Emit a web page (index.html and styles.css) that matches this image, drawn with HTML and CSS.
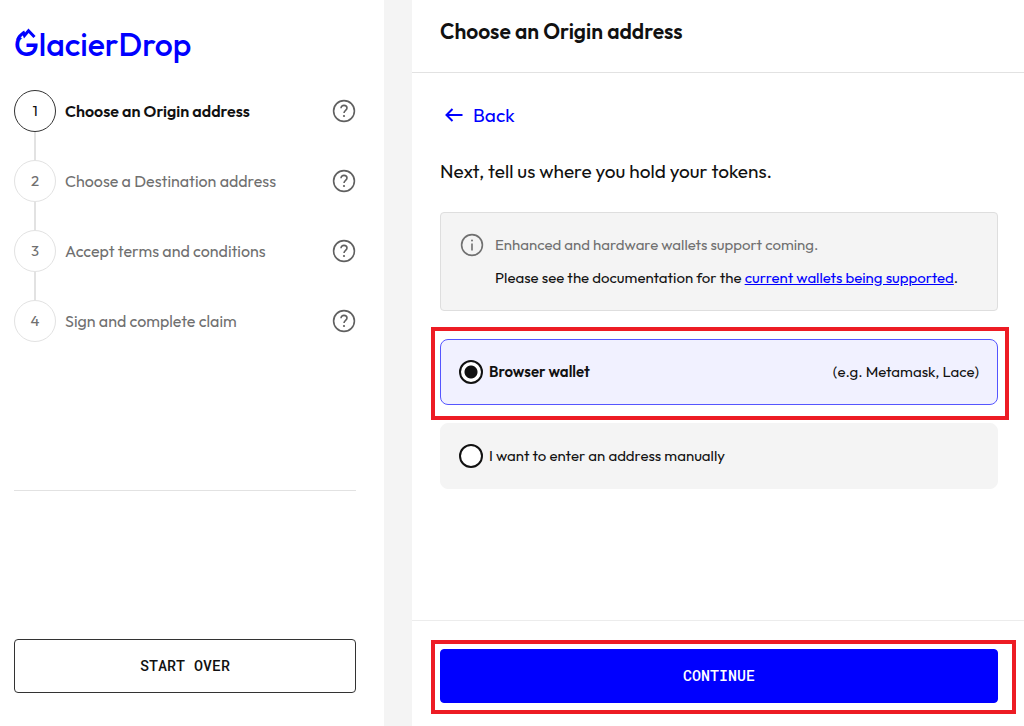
FILE: index.html
```html
<!DOCTYPE html>
<html lang="en">
<head>
  <meta charset="UTF-8" />
  <meta name="viewport" content="width=device-width, initial-scale=1" />
  <title>GlacierDrop</title>
  <link rel="stylesheet" href="styles.css">
</head>
<body>
  <!-- shared icons -->
  <svg class="defs" aria-hidden="true">
    <symbol id="icon-help" viewBox="0 0 24 24">
      <circle cx="12" cy="12" r="10.400" />
      <path d="M9 9.200C9 7.400 10.300 6.400 12 6.400s3 1 3 2.700c0 2.200-3 2.500-3 5" />
      <circle class="dot" cx="12" cy="17" r="1.100" />
    </symbol>
  </svg>

  <div class="layout">
    <aside class="sidebar">
      <div class="logo">
        <span>GlacierDrop</span>
        <svg class="logo-peak" viewBox="0 0 24 16" aria-hidden="true">
          <path class="snow" d="M5 4h19v11h-7l-3-3H8l-3-1z" />
          <path class="ridge" d="M3.500 14C4.500 11 6.500 9 9.500 6.800L10.500 9.500 14.500 4.800 20.500 11" />
        </svg>
      </div>

      <ol class="steps">
        <li class="step active">
          <span class="step-number">1</span>
          <span class="step-label">Choose an Origin address</span>
          <button class="help" type="button" aria-label="Help"><svg><use href="#icon-help" /></svg></button>
        </li>
        <li class="step">
          <span class="step-number">2</span>
          <span class="step-label">Choose a Destination address</span>
          <button class="help" type="button" aria-label="Help"><svg><use href="#icon-help" /></svg></button>
        </li>
        <li class="step">
          <span class="step-number">3</span>
          <span class="step-label">Accept terms and conditions</span>
          <button class="help" type="button" aria-label="Help"><svg><use href="#icon-help" /></svg></button>
        </li>
        <li class="step">
          <span class="step-number">4</span>
          <span class="step-label">Sign and complete claim</span>
          <button class="help" type="button" aria-label="Help"><svg><use href="#icon-help" /></svg></button>
        </li>
      </ol>

      <hr class="divider">
      <button class="btn btn-outline" type="button">START OVER</button>
    </aside>

    <main class="panel">
      <header class="panel-header">
        <h1>Choose an Origin address</h1>
      </header>

      <div class="panel-body">
        <a class="back" href="#">
          <svg viewBox="0 0 18 14" aria-hidden="true"><path d="M17.500 7H1.500M7.500 1l-6 6 6 6" /></svg>
          Back
        </a>
        <p class="lead">Next, tell us where you hold your tokens.</p>

        <div class="notice">
          <svg class="notice-icon" viewBox="0 0 24 24" aria-hidden="true">
            <circle cx="12" cy="12" r="10.400" />
            <path d="M12 10.500v7" />
            <circle class="dot" cx="12" cy="7.500" r="1" />
          </svg>
          <div>
            <p class="notice-title">Enhanced and hardware wallets support coming.</p>
            <p>Please see the documentation for the <a href="#">current wallets being supported</a>.</p>
          </div>
        </div>

        <form class="options">
          <label class="option selected">
            <input type="radio" name="wallet" value="browser" checked>
            <span class="option-name">Browser wallet</span>
            <span class="option-hint">(e.g. Metamask, Lace)</span>
            <span class="highlight"></span>
          </label>
          <label class="option">
            <input type="radio" name="wallet" value="manual">
            <span class="option-name">I want to enter an address manually</span>
          </label>
        </form>
      </div>

      <footer class="panel-footer">
        <button class="btn btn-primary" type="button">CONTINUE</button>
        <span class="highlight highlight-footer"></span>
      </footer>
    </main>
  </div>
</body>
</html>
```

FILE: styles.css
```css
* { box-sizing: border-box; }

body {
  margin: 0;
  background: #f4f4f4;
  color: #111;
  font-family: Outfit, Lato, sans-serif;
  font-size: 15px;
  line-height: 24px;
}

h1, p, ol { margin: 0; padding: 0; }
a { color: #00f; }
.defs { display: none; }

.layout {
  display: grid;
  grid-template-columns: 3fr 5fr;
  min-height: 100vh;
}

/* sidebar */
.sidebar {
  display: flex;
  flex-direction: column;
  padding: 24px 28px 33px 14px;
  background: #fff;
}

.logo {
  position: relative;
  color: #00f;
  font-size: 32px;
  font-weight: 500;
  line-height: 40px;
}

.logo-peak {
  position: absolute;
  top: 2px;
  left: 0;
  width: 24px;
  height: 16px;
  fill: none;
}
.logo-peak .snow { fill: #fff; }
.logo-peak .ridge { stroke: #00f; stroke-width: 3; }

.steps { margin-top: 26px; list-style: none; }

.step {
  display: grid;
  grid-template-columns: 42px 1fr 24px;
  align-items: center;
  column-gap: 9px;
  color: #707070;
  font-size: 16px;
}

/* connector line between two circles */
.step + .step::before {
  content: "";
  grid-column: 1 / -1;
  width: 2px;
  height: 28px;
  margin-left: 20px;
  background: #e2e2e2;
}

.step-number {
  display: flex;
  align-items: center;
  justify-content: center;
  height: 42px;
  border: 1px solid #e2e2e2;
  border-radius: 50%;
  font-size: 15px;
}

.step.active { color: #111; }
.step.active .step-number { border-color: #333; }
.step.active .step-label { font-weight: 600; }

.help {
  width: 24px;
  height: 24px;
  padding: 0;
  border: 0;
  background: none;
  color: #606060;
}
.help svg { display: block; width: 24px; height: 24px; }

.help svg, .notice-icon {
  fill: none;
  stroke: currentColor;
  stroke-width: 1.6;
}
.dot { fill: currentColor; stroke: none; }

.divider {
  width: 100%;
  margin: 148px 0 0;
  border: 0;
  border-top: 1px solid #e2e2e2;
}

/* buttons */
.btn {
  width: 100%;
  height: 54px;
  padding: 0 6px 2px;
  border: 1px solid #333;
  border-radius: 4px;
  font-family: "Roboto Mono", "Liberation Mono", monospace;
  font-size: 15px;
  font-weight: 500;
}
.btn-outline { margin-top: auto; background: #fff; color: #111; }
.btn-primary { border-color: #00f; background: #00f; color: #fff; }

/* main panel */
.panel {
  display: flex;
  flex-direction: column;
  margin-left: 28px;
  background: #fff;
}

.panel-header {
  padding: 19px 28px 29px;
  border-bottom: 1px solid #e2e2e2;
}
.panel-header h1 { font-size: 21px; font-weight: 600; line-height: 24px; }

.panel-body { flex: 1; padding: 30px 26px 28px 28px; }

.back {
  display: inline-flex;
  align-items: center;
  gap: 10px;
  padding-left: 5px;
  font-size: 19px;
  text-decoration: none;
}
.back svg {
  width: 18px;
  height: 14px;
  fill: none;
  stroke: currentColor;
  stroke-width: 2;
}

.lead { margin-top: 30px; font-size: 19px; }

.notice {
  display: flex;
  gap: 11px;
  margin-top: 29px;
  padding: 20px 19px;
  border: 1px solid #dedede;
  border-radius: 4px;
  background: #f4f4f4;
}
.notice p + p { margin-top: 9px; }
.notice-title, .notice-icon { color: #707070; }
.notice-icon { flex: none; width: 24px; height: 24px; }

.options {
  display: grid;
  gap: 18px;
  margin-top: 28px;
}

.option {
  position: relative;
  display: flex;
  align-items: center;
  gap: 6px;
  padding: 20px 18px;
  border: 1px solid #f4f4f4;
  border-radius: 8px;
  background: #f4f4f4;
}
.option.selected { border-color: #55f; background: #f1f1ff; }
.selected .option-name { font-weight: 600; }
.option-hint { margin-left: auto; }

.option input {
  appearance: none;
  width: 24px;
  height: 24px;
  margin: 0;
  border: 2px solid #111;
  border-radius: 50%;
  background: #fff;
}
.option input:checked {
  background: radial-gradient(circle, #111 6px, #fff 7px);
}

.panel-footer {
  position: relative;
  padding: 28px 26px 23px 28px;
  border-top: 1px solid #ececec;
}

/* red marker boxes */
.highlight {
  position: absolute;
  inset: -13px -12px -16px -10px;
  border: 4px solid #ed1c24;
  pointer-events: none;
}
.highlight-footer { inset: 19px 8px 12px 19px; }
```
